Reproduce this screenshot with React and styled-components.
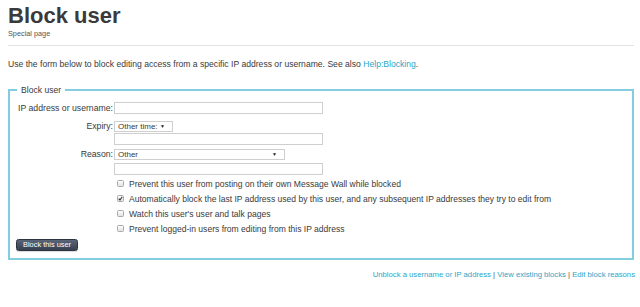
import React from "react";
import styled, { createGlobalStyle } from "styled-components";

const Global = createGlobalStyle`
  html, body { margin: 0; padding: 0; background: #fff; }
  body { font-family: "Liberation Sans", Arial, sans-serif; color: #3a3a3a; }
  * { box-sizing: border-box; }
`;

const Page = styled.div`
  padding: 0 6px 0 8px;
  width: 640px;
`;

const Title = styled.h1`
  margin: 3px 0 0;
  font-size: 22px;
  line-height: 26px;
  font-weight: 700;
  color: #3a3a3a;
`;

const Subtitle = styled.div`
  font-size: 7.3px;
  line-height: 10px;
  color: #555;
`;

const Rule = styled.hr`
  margin: 6px 0 0;
  border: 0;
  border-top: 1px solid #e2e2e2;
  height: 0;
`;

const Intro = styled.p`
  margin: 11.5px 0 0;
  font-size: 8.6px;
  line-height: 12px;
`;

const Link = styled.a`
  color: #2aa6c8;
  text-decoration: none;
`;

const Fieldset = styled.fieldset`
  margin: 14.5px 0 0;
  padding: 6px 7px 7px 7px;
  border: 2px solid #84cddf;
  min-width: 0;
`;

const Legend = styled.legend`
  padding: 0 4px;
  font-size: 8.6px;
  line-height: 12px;
  color: #3a3a3a;
`;

const Form = styled.div`
  display: grid;
  grid-template-columns: 96px 1fr;
  column-gap: 1px;
  align-items: center;
`;

const Label = styled.label`
  grid-column: 1;
  text-align: right;
  font-size: 8.7px;
  line-height: 11px;
  white-space: nowrap;
  margin-top: ${(p) => p.$mt || 0}px;
`;

const Cell = styled.div`
  grid-column: 2;
  display: flex;
  align-items: center;
  margin-top: ${(p) => p.$mt || 0}px;
`;

const TextInput = styled.input`
  display: block;
  width: 209px;
  height: 12px;
  margin: 0;
  border: 1px solid #cfcfcf;
  padding: 0 3px;
  font-family: "Liberation Sans", Arial, sans-serif;
  font-size: 8px;
  background: #fff;
  outline: none;
`;

const SelectWrap = styled.div`
  position: relative;
  display: flex;
  width: ${(p) => p.$w}px;
  height: 10.5px;
`;

const Select = styled.select`
  appearance: none;
  -webkit-appearance: none;
  display: block;
  margin: 0;
  width: 100%;
  height: 100%;
  border: 1px solid #cfcfcf;
  border-radius: 0;
  background: #fff;
  padding: 0 0 0 3px;
  font-family: "Liberation Sans", Arial, sans-serif;
  font-size: 8px;
  line-height: 8px;
  color: #3a3a3a;
  outline: none;
`;

const Arrow = styled.span`
  position: absolute;
  right: ${(p) => p.$r}px;
  top: 2.5px;
  font-size: 5px;
  line-height: 5px;
  color: #222;
  pointer-events: none;
`;

const CheckRow = styled.label`
  grid-column: 2;
  display: flex;
  align-items: center;
  height: 15px;
  font-size: 8.55px;
  margin-top: ${(p) => p.$mt || 0}px;
`;

const Box = styled.span`
  width: 7px;
  height: 7px;
  margin: 0 5px 0 3px;
  border: 1px solid #a9a9a9;
  border-radius: 1.5px;
  background: linear-gradient(#fdfdfd, #e3e3e3);
  display: flex;
  align-items: center;
  justify-content: center;
  flex: none;
`;

const Button = styled.button`
  grid-column: 1 / span 2;
  justify-self: start;
  margin: 3px 0 0 -1px;
  height: 12px;
  padding: 0 6px;
  border: 1px solid #2b3440;
  border-radius: 2.5px;
  background: linear-gradient(#59657a, #36404f);
  color: #fff;
  font-family: "Liberation Sans", Arial, sans-serif;
  font-size: 7.4px;
  line-height: 10px;
  box-shadow: 0 1px 1px rgba(0, 0, 0, 0.15);
`;

const Footer = styled.div`
  margin-top: 9px;
  text-align: right;
  font-size: 7.7px;
  line-height: 12px;
  margin-right: -1px;
`;

const Sep = styled.span`
  color: #555;
`;

function Check({ checked, children, mt }) {
  return (
    <CheckRow $mt={mt}>
      <Box>
        {checked && (
          <svg width="5" height="5" viewBox="0 0 10 10">
            <path d="M1.5 5.5 L4 8 L8.5 1.5" fill="none" stroke="#333" strokeWidth="2.2" />
          </svg>
        )}
      </Box>
      {children}
    </CheckRow>
  );
}

export default function App() {
  return (
    <Page>
      <Global />
      <Title>Block user</Title>
      <Subtitle>Special page</Subtitle>
      <Rule />
      <Intro>
        Use the form below to block editing access from a specific IP address or username. See also{" "}
        <Link href="#">Help:Blocking</Link>.
      </Intro>
      <Fieldset>
        <Legend>Block user</Legend>
        <Form>
          <Label>IP address or username:</Label>
          <Cell>
            <TextInput />
          </Cell>
          <Label $mt={7}>Expiry:</Label>
          <Cell $mt={7}>
            <SelectWrap $w={59}>
              <Select defaultValue="other">
                <option value="other">Other time:</option>
              </Select>
              <Arrow $r={8}>▼</Arrow>
            </SelectWrap>
          </Cell>
          <Cell $mt={1}>
            <TextInput />
          </Cell>
          <Label $mt={4}>Reason:</Label>
          <Cell $mt={4}>
            <SelectWrap $w={171}>
              <Select defaultValue="other">
                <option value="other">Other</option>
              </Select>
              <Arrow $r={8}>▼</Arrow>
            </SelectWrap>
          </Cell>
          <Cell $mt={3}>
            <TextInput />
          </Cell>
          <Check mt={1}>Prevent this user from posting on their own Message Wall while blocked</Check>
          <Check checked>
            Automatically block the last IP address used by this user, and any subsequent IP addresses they try to edit from
          </Check>
          <Check>Watch this user's user and talk pages</Check>
          <Check>Prevent logged-in users from editing from this IP address</Check>
          <Button>Block this user</Button>
        </Form>
      </Fieldset>
      <Footer>
        <Link href="#">Unblock a username or IP address</Link> <Sep>|</Sep>{" "}
        <Link href="#">View existing blocks</Link> <Sep>|</Sep> <Link href="#">Edit block reasons</Link>
      </Footer>
    </Page>
  );
}
